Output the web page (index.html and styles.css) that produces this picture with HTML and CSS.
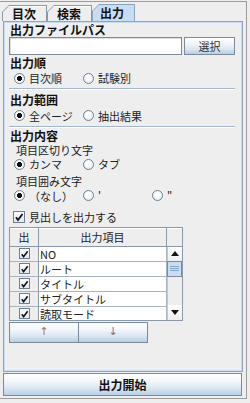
FILE: index.html
```html
<!DOCTYPE html>
<html lang="ja">
<head>
<meta charset="utf-8">
<title>出力</title>
<link rel="stylesheet" href="styles.css">
</head>
<body>
<div class="frame">
  <div class="tabs">
    <div class="tab"><div class="tab-in">目次</div></div>
    <div class="tab"><div class="tab-in">検索</div></div>
    <div class="tab sel"><div class="tab-in">出力</div></div>
  </div>
  <div class="panel">
    <div class="lbl h14">出力ファイルパス</div>
    <div class="pathrow">
      <div class="field"></div>
      <div class="btn choose">選択</div>
    </div>
    <div class="lbl h15">出力順</div>
    <div class="radios h17">
      <div class="opt"><span class="rb on"></span>目次順</div>
      <div class="opt"><span class="rb"></span>試験別</div>
    </div>
    <div class="sep"></div>
    <div class="lbl h15">出力範囲</div>
    <div class="radios h18">
      <div class="opt"><span class="rb on"></span>全ページ</div>
      <div class="opt"><span class="rb"></span>抽出結果</div>
    </div>
    <div class="sep last"></div>
    <div class="lbl h16">出力内容</div>
    <div class="sub h12">項目区切り文字</div>
    <div class="radios h17">
      <div class="opt"><span class="rb on"></span>カンマ</div>
      <div class="opt"><span class="rb"></span>タブ</div>
    </div>
    <div class="sub h16">項目囲み文字</div>
    <div class="radios h14">
      <div class="opt"><span class="rb on"></span>（なし）</div>
      <div class="opt"><span class="rb"></span>'</div>
      <div class="opt"><span class="rb"></span>"</div>
    </div>
    <div class="chkrow">
      <span class="cb"><svg viewBox="0 0 10 10" width="10" height="10"><path d="M2 5.2 L4 8 L8.5 2" fill="none" stroke="#111" stroke-width="1.8"/></svg></span>見出しを出力する
    </div>
    <div class="table">
      <div class="cols">
        <div class="hd c1">出</div><div class="hd c2">出力項目</div>
        <div class="cell c1"><span class="cb"><svg viewBox="0 0 10 10" width="10" height="10"><path d="M2 5.2 L4 8 L8.5 2" fill="none" stroke="#111" stroke-width="1.8"/></svg></span></div><div class="cell c2">NO</div>
        <div class="cell c1"><span class="cb"><svg viewBox="0 0 10 10" width="10" height="10"><path d="M2 5.2 L4 8 L8.5 2" fill="none" stroke="#111" stroke-width="1.8"/></svg></span></div><div class="cell c2">ルート</div>
        <div class="cell c1"><span class="cb"><svg viewBox="0 0 10 10" width="10" height="10"><path d="M2 5.2 L4 8 L8.5 2" fill="none" stroke="#111" stroke-width="1.8"/></svg></span></div><div class="cell c2">タイトル</div>
        <div class="cell c1"><span class="cb"><svg viewBox="0 0 10 10" width="10" height="10"><path d="M2 5.2 L4 8 L8.5 2" fill="none" stroke="#111" stroke-width="1.8"/></svg></span></div><div class="cell c2">サブタイトル</div>
        <div class="cell c1"><span class="cb"><svg viewBox="0 0 10 10" width="10" height="10"><path d="M2 5.2 L4 8 L8.5 2" fill="none" stroke="#111" stroke-width="1.8"/></svg></span></div><div class="cell c2">読取モード</div>
      </div>
      <div class="sb">
        <div class="sb-corner"></div>
        <div class="sb-btn"><svg viewBox="0 0 8 5" width="8" height="5"><path d="M0 5 L4 0 L8 5 Z" fill="#111"/></svg></div>
        <div class="sb-thumb"><span></span><span></span><span></span></div>
        <div class="sb-track"></div>
        <div class="sb-btn down"><svg viewBox="0 0 8 5" width="8" height="5"><path d="M0 0 L8 0 L4 5 Z" fill="#111"/></svg></div>
      </div>
    </div>
    <div class="moves">
      <div class="btn mv up">↑</div>
      <div class="btn mv dn">↓</div>
    </div>
  </div>
  <div class="btn start">出力開始</div>
</div>
</body>
</html>
```
FILE: styles.css
```css
html, body {
  margin: 0;
  padding: 0;
}
body {
  width: 250px;
  height: 403px;
  overflow: hidden;
  background: #eeeeee;
  font-family: "Noto Sans CJK JP", "Noto Sans", sans-serif;
  font-size: 11px;
  line-height: 12px;
  color: #222;
}
.frame {
  margin-top: 1px;
  width: 247px;
  height: 398px;
  box-sizing: border-box;
  border: 1px solid #9c9c9c;
  border-left: none;
  padding: 0 3px 2px 3px;
  display: flex;
  flex-direction: column;
}
.tabs {
  height: 19px;
  display: flex;
  align-items: flex-end;
  margin-left: -1px;
}
.tab {
  width: 45px;
  height: 16px;
  box-sizing: border-box;
  padding: 1px 1px 0 1px;
  background: #8a98a8;
  clip-path: polygon(0 7px, 7px 0, 100% 0, 100% 100%, 0 100%);
}
.tab.sel {
  width: 43px;
  height: 17px;
  background: #8aa2bc;
}
.tab-in {
  height: 100%;
  box-sizing: border-box;
  display: flex;
  align-items: center;
  padding-left: 9px;
  font-weight: bold;
  font-size: 12px;
  line-height: 13px;
  color: #111;
  background: linear-gradient(#ffffff 0, #ffffff 1px, #eeeeee 1px);
  clip-path: polygon(0 6px, 6px 0, 100% 0, 100% 100%, 0 100%);
}
.tab.sel .tab-in {
  background: #c8ddf2;
  padding-left: 7px;
}
.panel {
  height: 352px;
  box-sizing: border-box;
  border: 1px solid #8ea4c0;
  box-shadow: inset 0 0 0 1px #c8ddf2;
  padding: 1px 7px 0 5px;
}
.lbl {
  font-weight: bold;
  font-size: 12px;
  line-height: 13px;
  color: #111;
  margin-left: 1px;
  display: flex;
  align-items: center;
}
.sub {
  margin-left: 7px;
  display: flex;
  align-items: center;
}
.h12 { height: 12px; }
.h14 { height: 14px; }
.h15 { height: 15px; }
.h16 { height: 16px; }
.h17 { height: 17px; }
.h18 { height: 18px; }
.pathrow {
  display: flex;
  gap: 2px;
  height: 18px;
}
.field {
  width: 173px;
  box-sizing: border-box;
  border: 1px solid #7a8a99;
  background: #fff;
  box-shadow: inset 1px 1px 0 #e0e0e0;
}
.btn {
  box-sizing: border-box;
  border: 1px solid #7a8a99;
  background: linear-gradient(#ffffff 0%, #f2f6fb 35%, #dde8f3 65%, #b8cfe5 100%);
  display: flex;
  align-items: center;
  justify-content: center;
  color: #333;
}
.choose {
  width: 51px;
}
.radios {
  display: flex;
  align-items: center;
  padding-left: 5px;
}
.opt {
  width: 69px;
  display: flex;
  align-items: center;
  white-space: nowrap;
}
.rb {
  width: 11px;
  height: 11px;
  box-sizing: border-box;
  border: 1px solid #6f7f8f;
  border-radius: 50%;
  margin-right: 4px;
  background: radial-gradient(circle at 50% 40%, #ffffff 0, #ffffff 2px, #e4ecf4 5px);
  flex: none;
}
.rb.on {
  background: radial-gradient(circle, #111 0, #111 2.3px, #ffffff 2.8px, #ffffff 3.2px, #e4ecf4 5px);
}
.sep {
  margin: 1px 0 2px 0;
  height: 0;
  border-top: 1px solid #a3b8cc;
  border-bottom: 1px solid #ffffff;
}
.sep.last { margin-bottom: 0; }
.chkrow {
  margin-top: 5px;
  height: 19px;
  display: flex;
  align-items: center;
  padding-left: 4px;
}
.cb {
  width: 12px;
  height: 12px;
  box-sizing: border-box;
  border: 1px solid #6f7f8f;
  background: linear-gradient(#ffffff, #dde8f3);
  display: inline-flex;
  align-items: center;
  justify-content: center;
  margin-right: 4px;
  flex: none;
}
.table {
  width: 174px;
  height: 94px;
  box-sizing: border-box;
  border: 1px solid #8a98a8;
  display: flex;
  overflow: hidden;
}
.cols {
  width: 157px;
  display: grid;
  grid-template-columns: 29px 128px;
  grid-template-rows: 19px;
  grid-auto-rows: 15px;
  align-content: start;
}
.hd {
  box-sizing: border-box;
  background: linear-gradient(#ffffff 0, #ffffff 1px, #eeeeee 1px);
  border-bottom: 1px solid #8a98a8;
  border-right: 1px solid #8a98a8;
  display: flex;
  align-items: center;
  justify-content: center;
  color: #222;
}
.cell {
  box-sizing: border-box;
  border-bottom: 1px solid #a8b4c0;
  display: flex;
  align-items: center;
}
.cell.c1 {
  justify-content: center;
  background: #eeeeee;
  border-right: 1px solid #8a98a8;
}
.cell.c1 .cb { margin-right: 0; width: 11px; height: 11px; }
.cell.c2 {
  background: #ffffff;
  padding-left: 1px;
  white-space: nowrap;
  border-right: 1px solid #a8b4c0;
}
.sb {
  width: 15px;
  display: flex;
  flex-direction: column;
  background: #eeeeee;
}
.sb-corner {
  height: 19px;
  box-sizing: border-box;
  border-bottom: 1px solid #8a98a8;
  background: linear-gradient(#ffffff 0, #ffffff 1px, #eeeeee 1px);
  flex: none;
}
.sb-btn {
  height: 14px;
  box-sizing: border-box;
  flex: none;
  display: flex;
  align-items: center;
  justify-content: center;
  background: linear-gradient(#ffffff, #eeeeee);
  border-left: 1px solid #c0c8d0;
}
.sb-btn.down { height: 15px; }
.sb-thumb {
  height: 16px;
  box-sizing: border-box;
  flex: none;
  border: 1px solid #7a8aa8;
  background: #c8ddf2;
  display: flex;
  flex-direction: column;
  align-items: center;
  justify-content: center;
  gap: 1px;
}
.sb-thumb span {
  width: 9px;
  height: 1px;
  background: #8aa6cc;
}
.sb-track {
  flex: 1;
  border-left: 1px solid #c0c8d0;
}
.moves {
  display: flex;
  margin-top: 1px;
  height: 21px;
}
.mv {
  width: 70px;
  font-size: 11px;
  font-family: "DejaVu Sans", sans-serif;
}
.mv + .mv { margin-left: -1px; }
.mv.up { color: #b07838; }
.mv.dn { color: #6a7890; }
.start {
  margin-top: 1px;
  width: 239px;
  height: 23px;
  font-weight: bold;
  font-size: 12px;
  color: #111;
}
```
